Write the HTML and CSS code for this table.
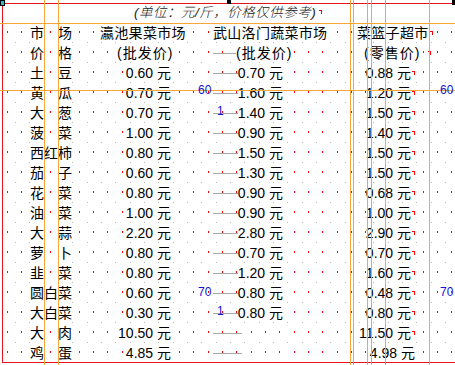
FILE: index.html
```html
<!DOCTYPE html>
<html lang="zh-CN">
<head>
<meta charset="utf-8">
<title>蔬菜价格</title>
<link rel="stylesheet" href="styles.css">
</head>
<body>
<div class="sheet">
  <svg class="dots" width="455" height="365" viewBox="0 0 455 365">
    <defs>
      <pattern id="grid" x="0" y="23" width="43" height="20" patternUnits="userSpaceOnUse">
        <rect x="7" y="8" width="1" height="2" fill="#ff0000"/>
        <rect x="21" y="8" width="1" height="2" fill="#ff0000"/>
        <rect x="36" y="8" width="1" height="2" fill="#ff0000"/>
        <rect x="1" y="19" width="1" height="1" fill="#b8b8b8"/>
        <rect x="15" y="19" width="1" height="1" fill="#b8b8b8"/>
        <rect x="29" y="19" width="1" height="1" fill="#b8b8b8"/>
      </pattern>
    </defs>
    <rect x="3" y="23" width="452" height="339" fill="url(#grid)"/>
    <g fill="#a8a8a8">
      <rect x="213" y="53" width="29" height="1"/>
      <rect x="213" y="73" width="29" height="1"/>
      <rect x="213" y="93" width="29" height="1"/>
      <rect x="213" y="113" width="29" height="1"/>
      <rect x="213" y="133" width="29" height="1"/>
      <rect x="213" y="153" width="29" height="1"/>
      <rect x="213" y="173" width="29" height="1"/>
      <rect x="213" y="193" width="29" height="1"/>
      <rect x="213" y="213" width="29" height="1"/>
      <rect x="213" y="233" width="29" height="1"/>
      <rect x="213" y="253" width="29" height="1"/>
      <rect x="213" y="273" width="29" height="1"/>
      <rect x="213" y="293" width="29" height="1"/>
      <rect x="213" y="313" width="29" height="1"/>
      <rect x="213" y="333" width="29" height="1"/>
      <rect x="213" y="353" width="29" height="1"/>
    </g>
  </svg>

  <div class="doc">
    <div class="title">(单位：元/斤，价格仅供参考)<span class="pm pm-title"></span></div>
    <div class="table">
      <div class="row">
        <span></span><span class="k"><span class="t">市</span></span><span class="k"></span><span class="k"><span class="t">场</span></span>
        <span class="d h1"><span class="t">瀛池果菜市场</span></span>
        <span class="e h1"><span class="t">武山洛门蔬菜市场</span></span>
        <span class="f h1"><span class="t">菜篮子超市</span><span class="pm"></span></span>
      </div>
      <div class="row">
        <span></span><span class="k"><span class="t">价</span></span><span class="k"></span><span class="k"><span class="t">格</span></span>
        <span class="d h2"><span class="t">(批发价)</span></span>
        <span class="e h2"><span class="t">(批发价)</span></span>
        <span class="f h2"><span class="t">(零售价)</span><span class="pm pm-far"></span></span>
      </div>
      <div class="row">
        <span></span><span class="k"><span class="t">土</span></span><span class="k"></span><span class="k"><span class="t">豆</span></span>
        <span class="d v"><span class="t">0.60 元</span></span><span class="e v"><span class="t">0.70 元</span></span><span class="f v"><span class="t">0.88 元</span><span class="pm"></span></span>
      </div>
      <div class="row">
        <span></span><span class="k"><span class="t">黄</span></span><span class="k"></span><span class="k"><span class="t">瓜</span></span>
        <span class="d v"><span class="t">0.70 元</span></span><span class="e v"><span class="t">1.60 元</span></span><span class="f v"><span class="t">1.20 元</span><span class="pm"></span></span>
      </div>
      <div class="row">
        <span></span><span class="k"><span class="t">大</span></span><span class="k"></span><span class="k"><span class="t">葱</span></span>
        <span class="d v"><span class="t">0.70 元</span></span><span class="e v"><span class="t">1.40 元</span></span><span class="f v"><span class="t">1.50 元</span><span class="pm"></span></span>
      </div>
      <div class="row">
        <span></span><span class="k"><span class="t">菠</span></span><span class="k"></span><span class="k"><span class="t">菜</span></span>
        <span class="d v"><span class="t">1.00 元</span></span><span class="e v"><span class="t">0.90 元</span></span><span class="f v"><span class="t">1.40 元</span><span class="pm"></span></span>
      </div>
      <div class="row">
        <span></span><span class="k"><span class="t">西</span></span><span class="k"><span class="t">红</span></span><span class="k"><span class="t">柿</span></span>
        <span class="d v"><span class="t">0.80 元</span></span><span class="e v"><span class="t">1.50 元</span></span><span class="f v"><span class="t">1.50 元</span><span class="pm"></span></span>
      </div>
      <div class="row">
        <span></span><span class="k"><span class="t">茄</span></span><span class="k"></span><span class="k"><span class="t">子</span></span>
        <span class="d v"><span class="t">0.60 元</span></span><span class="e v"><span class="t">1.30 元</span></span><span class="f v"><span class="t">1.50 元</span><span class="pm"></span></span>
      </div>
      <div class="row">
        <span></span><span class="k"><span class="t">花</span></span><span class="k"></span><span class="k"><span class="t">菜</span></span>
        <span class="d v"><span class="t">0.80 元</span></span><span class="e v"><span class="t">0.90 元</span></span><span class="f v"><span class="t">0.68 元</span><span class="pm"></span></span>
      </div>
      <div class="row">
        <span></span><span class="k"><span class="t">油</span></span><span class="k"></span><span class="k"><span class="t">菜</span></span>
        <span class="d v"><span class="t">1.00 元</span></span><span class="e v"><span class="t">0.90 元</span></span><span class="f v"><span class="t">1.00 元</span><span class="pm"></span></span>
      </div>
      <div class="row">
        <span></span><span class="k"><span class="t">大</span></span><span class="k"></span><span class="k"><span class="t">蒜</span></span>
        <span class="d v"><span class="t">2.20 元</span></span><span class="e v"><span class="t">2.80 元</span></span><span class="f v"><span class="t">2.90 元</span><span class="pm"></span></span>
      </div>
      <div class="row">
        <span></span><span class="k"><span class="t">萝</span></span><span class="k"></span><span class="k"><span class="t">卜</span></span>
        <span class="d v"><span class="t">0.80 元</span></span><span class="e v"><span class="t">0.70 元</span></span><span class="f v"><span class="t">0.70 元</span><span class="pm"></span></span>
      </div>
      <div class="row">
        <span></span><span class="k"><span class="t">韭</span></span><span class="k"></span><span class="k"><span class="t">菜</span></span>
        <span class="d v"><span class="t">0.80 元</span></span><span class="e v"><span class="t">1.20 元</span></span><span class="f v"><span class="t">1.60 元</span><span class="pm"></span></span>
      </div>
      <div class="row">
        <span></span><span class="k"><span class="t">圆</span></span><span class="k"><span class="t">白</span></span><span class="k"><span class="t">菜</span></span>
        <span class="d v"><span class="t">0.60 元</span></span><span class="e v"><span class="t">0.80 元</span></span><span class="f v"><span class="t">0.48 元</span><span class="pm"></span></span>
      </div>
      <div class="row">
        <span></span><span class="k"><span class="t">大</span></span><span class="k"><span class="t">白</span></span><span class="k"><span class="t">菜</span></span>
        <span class="d v"><span class="t">0.30 元</span></span><span class="e v"><span class="t">0.80 元</span></span><span class="f v"><span class="t">0.80 元</span><span class="pm"></span></span>
      </div>
      <div class="row">
        <span></span><span class="k"><span class="t">大</span></span><span class="k"></span><span class="k"><span class="t">肉</span></span>
        <span class="d v"><span class="t">10.50 元</span></span><span class="e v"></span><span class="f v"><span class="t">11.50 元</span><span class="pm"></span></span>
      </div>
      <div class="row">
        <span></span><span class="k"><span class="t">鸡</span></span><span class="k"></span><span class="k"><span class="t">蛋</span></span>
        <span class="d v"><span class="t">4.85 元</span></span><span class="e v"></span><span class="f v"><span class="t">4.98 元</span></span>
      </div>
    </div>
  </div>

  <svg class="guides" width="455" height="365" viewBox="0 0 455 365">
    <g fill="#e8141c">
      <rect x="0" y="3" width="455" height="1"/>
      <rect x="2" y="3" width="1" height="360"/>
      <rect x="2" y="362" width="453" height="1"/>
    </g>
    <g fill="#f8a53a">
      <rect x="0" y="23" width="455" height="1"/>
      <rect x="0" y="90" width="455" height="1"/>
      <rect x="44" y="0" width="1" height="365"/>
      <rect x="58" y="0" width="1" height="365"/>
      <rect x="350" y="0" width="1" height="365"/>
      <rect x="353" y="0" width="1" height="365"/>
      <rect x="367" y="0" width="1" height="365"/>
      <rect x="371" y="0" width="1" height="365"/>
      <rect x="385" y="0" width="1" height="365"/>
      <rect x="429" y="0" width="1" height="365"/>
    </g>
    <rect x="0.5" y="0.5" width="4" height="5" fill="#33bbbb" stroke="#000"/>
    <rect x="227" y="0" width="4" height="4" fill="#000"/>
    <rect x="452" y="0" width="3" height="5" fill="#000"/>
    <g class="num">
      <text x="198" y="94">60</text>
      <text x="440" y="94">60</text>
      <text x="217" y="115">1</text>
      <text x="198" y="296">70</text>
      <text x="440" y="296">70</text>
      <text x="217" y="315">1</text>
    </g>
  </svg>
</div>
</body>
</html>
```

FILE: styles.css
```css
* { box-sizing: border-box; }
html, body { margin: 0; padding: 0; }
body {
  width: 455px;
  height: 365px;
  overflow: hidden;
  background: #fff;
  color: #000;
  font-family: "Liberation Sans", "Noto Sans CJK SC", sans-serif;
  font-size: 14px;
}
.sheet { position: relative; width: 455px; height: 365px; }
.dots, .guides {
  position: absolute;
  left: 0;
  top: 0;
  width: 455px;
  height: 365px;
  pointer-events: none;
  shape-rendering: crispEdges;
}
.dots { z-index: 0; }
.guides { z-index: 2; }
.num { fill: #1010d8; font-family: "Liberation Sans", sans-serif; font-size: 12px; }

.doc { position: relative; z-index: 1; padding-top: 3px; }
.title {
  height: 20px;
  line-height: 20px;
  padding-left: 134px;
  font-size: 13.5px;
  font-style: italic;
  font-weight: 300;
  color: #222;
  letter-spacing: 0.5px;
  white-space: nowrap;
}
.table { display: flex; flex-direction: column; }
.row {
  display: grid;
  grid-template-columns: 30px 14px 14px 14px 141px 137px 105px;
  height: 20px;
  line-height: 20px;
  white-space: nowrap;
}
.row > span { display: block; }
.t { background: #fff; }
.k { text-align: center; }

.h1 { letter-spacing: 0.3px; }
.h2 { letter-spacing: 1px; }
.d.h1 { padding-left: 28px; }
.e.h1 { padding-left: 0; }
.f.h1 { padding-left: 7px; }
.d.h2 { padding-left: 45px; }
.e.h2 { padding-left: 23px; }
.f.h2 { padding-left: 14px; }

.v { text-align: right; }
.d.v { padding-right: 42px; }
.e.v { padding-right: 67px; }
.f.v { padding-right: 40px; }

.pm {
  display: inline-block;
  width: 3px;
  height: 4px;
  margin-left: 1px;
  border-top: 1px solid #ff0000;
  border-right: 1px solid #ff0000;
  vertical-align: 3px;
}
.pm-far { margin-left: 8px; }
.pm-title { margin-left: 3px; }
```
